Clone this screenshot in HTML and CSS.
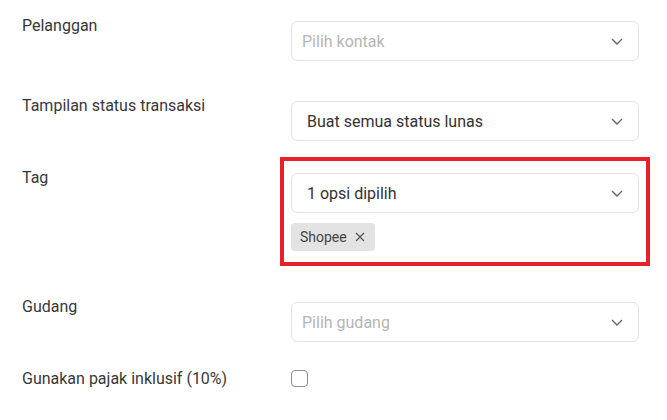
FILE: index.html
```html
<!DOCTYPE html>
<html lang="id">
<head>
    <meta charset="UTF-8">
    <meta name="viewport" content="width=device-width, initial-scale=1.0">
    <title>Pengaturan Transaksi</title>
    <link rel="stylesheet" href="styles.css">
</head>
<body>
    <div class="form">
        <!-- Pelanggan -->
        <div class="form-row">
            <label class="form-label">Pelanggan</label>
            <div class="form-field">
                <div class="select">
                    <span class="select-placeholder">Pilih kontak</span>
                    <svg class="chevron" width="12" height="7" viewBox="0 0 12 7"><path d="M1 1l5 5 5-5" fill="none" stroke="#666" stroke-width="1.4"/></svg>
                </div>
            </div>
        </div>

        <!-- Status transaksi -->
        <div class="form-row row-sm">
            <label class="form-label">Tampilan status transaksi</label>
            <div class="form-field">
                <div class="select">
                    <span class="select-value">Buat semua status lunas</span>
                    <svg class="chevron" width="12" height="7" viewBox="0 0 12 7"><path d="M1 1l5 5 5-5" fill="none" stroke="#666" stroke-width="1.4"/></svg>
                </div>
            </div>
        </div>

        <!-- Tag -->
        <div class="form-row row-lg">
            <label class="form-label">Tag</label>
            <div class="form-field highlight">
                <div class="select">
                    <span class="select-value">1 opsi dipilih</span>
                    <svg class="chevron" width="12" height="7" viewBox="0 0 12 7"><path d="M1 1l5 5 5-5" fill="none" stroke="#666" stroke-width="1.4"/></svg>
                </div>
                <div class="tags">
                    <span class="tag">Shopee
                        <svg width="10" height="10" viewBox="0 0 10 10"><path d="M1 1l8 8M9 1l-8 8" fill="none" stroke="#555" stroke-width="1.2"/></svg>
                    </span>
                </div>
            </div>
        </div>

        <!-- Gudang -->
        <div class="form-row row-sm">
            <label class="form-label">Gudang</label>
            <div class="form-field">
                <div class="select">
                    <span class="select-placeholder">Pilih gudang</span>
                    <svg class="chevron" width="12" height="7" viewBox="0 0 12 7"><path d="M1 1l5 5 5-5" fill="none" stroke="#666" stroke-width="1.4"/></svg>
                </div>
            </div>
        </div>

        <!-- Pajak -->
        <div class="form-row">
            <label class="form-label">Gunakan pajak inklusif (10%)</label>
            <div class="form-field">
                <span class="checkbox"></span>
            </div>
        </div>
    </div>
</body>
</html>
```

FILE: styles.css
```css
body {
    margin: 0;
    background-color: #fff;
    font-family: Roboto, "Liberation Sans", sans-serif;
    color: #333;
}

.form {
    padding: 15px 28px 0 22px;
}

.form-row {
    display: flex;
    align-items: flex-start;
    margin-bottom: 34px;
}

.form-row.row-sm {
    margin-bottom: 26px;
}

.form-row.row-lg {
    margin-bottom: 45px;
}

.form-label {
    width: 269px;
    flex-shrink: 0;
    font-size: 16px;
    line-height: 22px;
    color: #383838;
}

.form-field {
    flex: 1;
    margin-top: 6px;
}

.select {
    height: 40px;
    box-sizing: border-box;
    border: 1px solid #e4e4e4;
    border-radius: 6px;
    display: flex;
    align-items: center;
    justify-content: space-between;
    padding: 0 15px 0 10px;
    font-size: 16px;
}

.select-placeholder {
    color: #b5b5b5;
}

.select-value {
    color: #333;
    padding-left: 5px;
}

.chevron {
    display: block;
}

.tags {
    display: flex;
    margin-top: 10px;
}

.tag {
    display: inline-flex;
    align-items: center;
    gap: 8px;
    height: 28px;
    padding: 0 10px 0 9px;
    background-color: #e3e3e3;
    border-radius: 4px;
    font-size: 14px;
    color: #444;
}

/* Sorotan merah di sekitar field tag */
.highlight {
    position: relative;
}

.highlight::after {
    content: '';
    position: absolute;
    top: -16px;
    left: -11px;
    right: -11px;
    bottom: -15px;
    border: 4px solid #e8202a;
    pointer-events: none;
}

.checkbox {
    display: block;
    width: 17px;
    height: 17px;
    box-sizing: border-box;
    margin-top: -4px;
    border: 1px solid #8c8c8c;
    border-radius: 4px;
}
```
